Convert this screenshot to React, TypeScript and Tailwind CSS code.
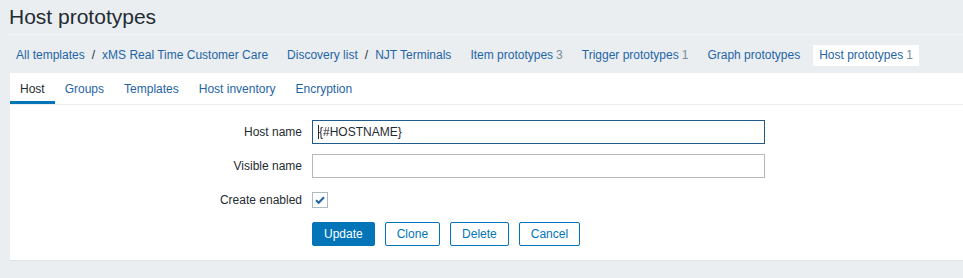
import React from "react";

const crumbs: { items: string[]; count?: string; active?: boolean }[] = [
  { items: ["All templates", "xMS Real Time Customer Care"] },
  { items: ["Discovery list", "NJT Terminals"] },
  { items: ["Item prototypes"], count: "3" },
  { items: ["Trigger prototypes"], count: "1" },
  { items: ["Graph prototypes"] },
  { items: ["Host prototypes"], count: "1", active: true },
];

const tabs = ["Host", "Groups", "Templates", "Host inventory", "Encryption"];

export default function App() {
  return (
    <div
      className="min-h-[278px] bg-[#ebeef0] text-[12px] text-[#1f2c33]"
      style={{ fontFamily: '"Liberation Sans", Arial, sans-serif' }}
    >
      {/* Header */}
      <div className="ml-[8px] border-b border-[#f4f5f6] pl-[1px] pt-[5px] pb-[5px]">
        <h1 className="text-[21px] leading-[24px] font-normal text-[#1f2c33]">Host prototypes</h1>
      </div>

      {/* Breadcrumbs */}
      <div className="flex h-[38px] items-center gap-[7px] pl-[10px] pt-[2px]">
        {crumbs.map((c, i) => (
          <div
            key={i}
            className={`flex h-[21px] items-center px-[6px] leading-[21px] ${c.active ? "bg-white" : ""}`}
          >
            {c.items.map((t, j) => (
              <React.Fragment key={j}>
                {j > 0 && <span className="mx-[7px] text-[#1f2c33]">/</span>}
                <span className="text-[#1f65a6]">{t}</span>
              </React.Fragment>
            ))}
            {c.count && <span className="ml-[3px] text-[#768d99]">{c.count}</span>}
          </div>
        ))}
      </div>

      {/* Panel */}
      <div className="ml-[10px] border-b border-[#dfe4e7] bg-white pb-[14px]">
        <div className="flex border-b border-[#ebeef0]">
          {tabs.map((t, i) => (
            <div
              key={t}
              className={`h-[31px] border-b-[3px] px-[10px] pt-[9px] pb-[5px] leading-[14px] ${
                i === 0 ? "border-[#0275b8] text-[#1f2c33]" : "border-transparent text-[#1f65a6]"
              }`}
            >
              {t}
            </div>
          ))}
        </div>

        <div className="grid grid-cols-[292px_453px] gap-x-[10px] gap-y-[10px] pt-[15px]">
          <div className="flex h-[24px] items-center justify-end">Host name</div>
          <div className="relative h-[24px]">
            <input
              readOnly
              defaultValue="{#HOSTNAME}"
              className="h-[24px] w-[453px] border border-[#1f5b8c] bg-white px-[6px] text-[12px] text-[#1f2c33] outline-none"
              style={{ fontFamily: '"Liberation Sans", Arial, sans-serif' }}
            />
            <span className="absolute left-[6px] top-[5px] h-[14px] w-px bg-[#1f2c33]" />
          </div>

          <div className="flex h-[24px] items-center justify-end">Visible name</div>
          <div className="h-[24px]">
            <input
              readOnly
              className="h-[24px] w-[453px] border border-[#b5b9bb] bg-white px-[6px] text-[12px] outline-none"
            />
          </div>

          <div className="flex h-[24px] items-center justify-end">Create enabled</div>
          <div className="flex h-[24px] items-center">
            <div className="flex h-[16px] w-[16px] items-center justify-center border border-[#acbbc2] bg-white">
              <svg width="12" height="12" viewBox="0 0 12 12">
                <path d="M2 6.2 L4.7 8.8 L10 3.2" fill="none" stroke="#1f65a6" strokeWidth="2" />
              </svg>
            </div>
          </div>

          <div />
          <div className="flex h-[24px] gap-[10px]">
            <button className="h-[24px] rounded-[2px] border border-[#0275b8] bg-[#0275b8] px-[11px] text-[12px] text-white">
              Update
            </button>
            {["Clone", "Delete", "Cancel"].map((b) => (
              <button
                key={b}
                className="h-[24px] rounded-[2px] border border-[#0275b8] bg-white px-[11px] text-[12px] text-[#0275b8]"
              >
                {b}
              </button>
            ))}
          </div>
        </div>
      </div>
    </div>
  );
}
